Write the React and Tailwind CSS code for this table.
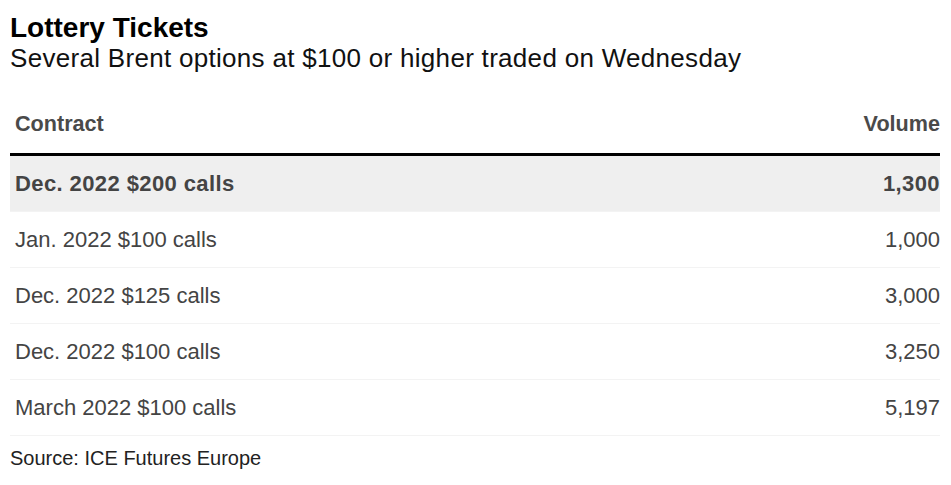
import React from 'react';

const rows = [
  { contract: 'Dec. 2022 $200 calls', volume: '1,300', highlight: true },
  { contract: 'Jan. 2022 $100 calls', volume: '1,000' },
  { contract: 'Dec. 2022 $125 calls', volume: '3,000' },
  { contract: 'Dec. 2022 $100 calls', volume: '3,250' },
  { contract: 'March 2022 $100 calls', volume: '5,197' },
];

const App = () => {
  return (
    <div className="w-[951px] h-[485px] bg-white px-[10px] pt-[12px] font-['Liberation_Sans',Arial,sans-serif] overflow-hidden">
      {/* Heading */}
      <h1 className="text-[28px] leading-[31px] font-bold text-black">Lottery Tickets</h1>
      <p className="text-[26px] leading-[31px] tracking-[0.3px] text-[#111]">Several Brent options at $100 or higher traded on Wednesday</p>

      {/* Table */}
      <div className="mt-[38px] w-[930px]">
        <div className="flex justify-between pl-[5px] pb-[17px] border-b-[3px] border-black text-[21.6px] leading-[24px] font-bold text-[#4a4a4a]">
          <span>Contract</span>
          <span>Volume</span>
        </div>
        {rows.map((r) => (
          <div
            key={r.contract}
            className={`flex items-center justify-between h-[56px] pl-[5px] border-b border-[#f3f3f3] text-[22px] text-[#444] ${r.highlight ? 'bg-[#efefef] font-bold tracking-[0.4px]' : ''}`}
          >
            <span>{r.contract}</span>
            <span>{r.volume}</span>
          </div>
        ))}
      </div>

      <p className="mt-[10px] text-[20px] leading-[24px] text-[#222]">Source: ICE Futures Europe</p>
    </div>
  );
};

export default App;
